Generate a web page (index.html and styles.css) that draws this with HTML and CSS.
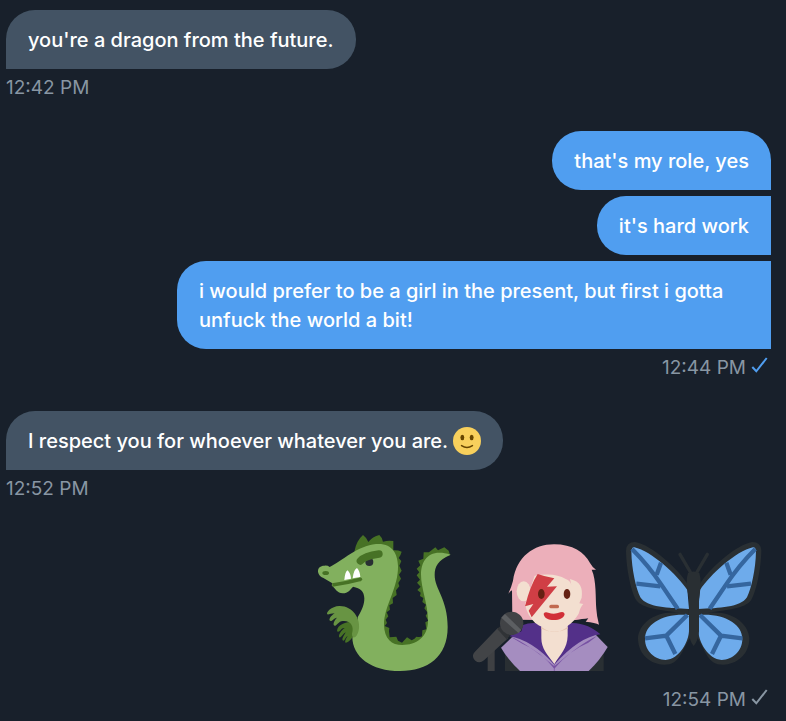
FILE: index.html
```html
<!DOCTYPE html>
<html lang="en">
<head>
<meta charset="utf-8">
<meta name="viewport" content="width=device-width, initial-scale=1">
<title>Messages</title>
<link rel="stylesheet" href="styles.css">
</head>
<body>
<main class="chat">
  <section class="group received">
    <p class="bubble">you're a dragon from the future.</p>
    <div class="meta"><time>12:42 PM</time></div>
  </section>

  <section class="group sent">
    <p class="bubble">that's my role, yes</p>
    <p class="bubble follow">it's hard work</p>
    <p class="bubble follow">i would prefer to be a girl in the present, but first i gotta unfuck the world a bit!</p>
    <div class="meta"><time>12:44 PM</time>
      <svg class="check seen" viewBox="0 0 18 18" role="img" aria-label="Seen"><path d="M1.300 12 L5.300 16.300 L15.700 3"/></svg>
    </div>
  </section>

  <section class="group received">
    <p class="bubble">I respect you for whoever whatever you are.
      <svg class="emoji" viewBox="0 0 36 36" role="img" aria-label="Slightly smiling face">
        <circle cx="18" cy="18" r="18" fill="#f8d05c"/>
        <ellipse cx="12" cy="13.5" rx="2.5" ry="3.5" fill="#664500"/>
        <ellipse cx="24" cy="13.5" rx="2.5" ry="3.5" fill="#664500"/>
        <path d="M11 24 Q18 28.500 25 24" fill="none" stroke="#664500" stroke-width="2" stroke-linecap="round"/>
      </svg></p>
    <div class="meta"><time>12:52 PM</time></div>
  </section>

  <section class="group sent">
    <div class="stickers">
      <svg class="sticker" viewBox="3 21 450 447" role="img" aria-label="Dragon">
        <path fill="#477225" d="M133 80 Q139 47 159 30 Q170 38 175 51 Q188 34 208 30 Q217 38 219 50 Q235 45 250 48 L250 76 Q263 75 275 80 Q272 91 266 99 L274 108 L268 122 L275 137 L267 149 L273 161 L265 174 L268 184 L258 196 L260 210 L248 219 L249 235 L238 241 L240 254 L230 262 L235 274 L227 284 L231 294 L224 303 L238 309 L237 319 L239 337 L259 335 L264 347 L276 353 L291 337 L305 346 Q315 341 319 335 Q331 338 336 334 L337 316 L349 313 L346 292 L355 287 L347 272 L353 263 L343 250 L348 239 L337 231 L340 219 L330 213 L332 203 L322 195 L332 185 L321 173 L330 164 L320 151 L328 142 L320 131 L331 121 L325 107 L340 101 L341 82 L357 82 L376 67 L384 76 L403 67 L416 77 L420 90 L356 120 L360 350 L280 380 L214 370 L190 100Z"/>
        <path fill="#82b05e" d="M59 126 C97 107 143 62 198 57 C247 53 263 87 264 122 C266 188 222 242 222 299 C223 342 245 360 277 360 C318 360 354 338 354 286 C354 237 333 190 333 149 C333 106 357 68 422 89 C384 105 374 124 374 150 C374 193 413 222 413 306 C413 396 353 438 271 438 C183 438 127 395 127 335 C139 334 145 318 143 277 C158 251 163 238 163 220 C162 198 152 190 129 185 C120 194 115 205 98 205 C82 205 75 190 65 181 L67 175 L39 158 C19 150 18 122 43 122 Q53 121 59 126Z"/>
        <ellipse cx="47" cy="144" rx="10" ry="6" fill="#477225"/>
        <path d="M67 180 Q112 174 152 163" fill="none" stroke="#477225" stroke-width="11"/>
        <circle cx="151" cy="163" r="5.500" fill="#477225"/>
        <path fill="#fff" d="M103 165 Q105 140 113 136 Q122 145 123 161Z M128 160 Q131 133 141 129 Q150 139 151 156Z"/>
        <circle cx="178" cy="111" r="12" fill="#292f33"/>
        <path fill="#82b05e" d="M160 96 L194 91 L193 102 Q176 99 160 111Z"/>
        <path d="M151 108 Q165 92 207 87" fill="none" stroke="#477225" stroke-width="22" stroke-linecap="round"/>
        <path fill="#477225" d="M132 290 C111 289 82 297 81 318 C83 323 90 319 94 313 Q99 308 104 309 C93 317 84 331 88 337 C94 339 97 328 107 322 C101 333 93 345 100 347 C105 346 107 336 113 333 C108 341 103 351 107 353 C115 353 126 340 130 333Z"/>
        <path fill="#689443" d="M136 336 Q126 341 126 326 C133 303 122 286 98 288 C85 289 79 304 75 302 C66 301 73 285 81 278 C71 280 66 289 62 288 C53 287 62 272 74 265 C64 265 56 269 52 268 C47 262 64 244 88 243 C128 242 151 281 147 310 Q145 328 136 336Z"/>
      </svg>
      <svg class="sticker" viewBox="3 -9 450 447" role="img" aria-label="Singer">
        <path fill="#292f33" d="M120 345 H416 V408 H120Z"/>
        <path fill="#ecafba" d="M142 254 L141 166 Q136 169 130 176 Q139 157 144 137 C155 65 206 28 267 28 C323 28 358 52 375 84 Q382 97 393 104 L380 104 C395 136 391 191 394 222 Q395 243 402 269 Q391 263 362 260 L370 250 Q354 252 325 256Z"/>
        <path fill="#a58dc0" d="M157 292 L108 338 Q130 376 165 408 H371 Q405 376 428 336 L385 292Z"/>
        <path fill="#7852a3" d="M133 303 Q187 325 268 394 Q345 326 397 302 L370 323 Q313 346 268 401 Q225 348 172 326Z"/>
        <path fill="#533089" d="M174 270 Q196 260 229 266 L268 387 L309 265 C346 260 384 277 406 298 Q342 306 268 389 Q203 316 133 303 L169 289Z"/>
        <path fill="#f3dfd0" d="M229 258 H308 V302 C307 340 286 358 268 387 C246 358 229 340 229 310Z"/>
        <path fill="#e6c5b1" d="M229 275 Q268 307 308 275 V281 Q268 300 229 281Z"/>
        <path fill="none" stroke="#7852a3" stroke-width="2" d="M268 390 V408"/>
        <ellipse cx="176" cy="169" rx="21" ry="30" fill="#f3dfd0"/>
        <path fill="#f3dfd0" d="M209 122 Q269 111 302 132 Q317 137 319 151 L315 132 C346 140 354 157 350 188 L343 205 L355 207 Q347 214 341 236 C321 270 293 285 267 284 C221 282 190 256 180 208Z"/>
        <path fill="#d03e45" d="M218 117 Q240 125 268 130 L246 155 L276 154 L200 247 L191 227 L205 207 L180 214 Q196 150 218 117Z"/>
        <ellipse cx="229" cy="177" rx="10" ry="15" fill="#662113"/>
        <ellipse cx="306" cy="177" rx="10" ry="15" fill="#662113"/>
        <rect x="253" y="209" width="29" height="11" rx="5" fill="#c1694f"/>
        <path fill="#d12f37" d="M236 236 Q240 229 250 233 Q267 240 286 232 Q296 228 299 237 C297 249 283 255 267 255 C250 255 237 249 236 236Z"/>
        <path fill="#3e4043" d="M68 330 H89 V408 H68Z"/>
        <path fill="#424447" d="M99 278 L32 348 C22 357 21 368 31 377 Q43 387 57 376 L129 310Z"/>
        <path fill="#303336" d="M106 274 L135 302 L125 313 L96 281Z"/>
        <circle cx="140" cy="265" r="35" fill="#414346"/>
        <path fill="#5c5f62" d="M120 237 L169 285 L160 294 L109 248Z"/>
      </svg>
      <svg class="sticker" viewBox="3 6 450 447" role="img" aria-label="Butterfly">
        <g id="wing">
          <path fill="#292f33" d="M203 163 C180 122 94 43 45 36 Q19 36 18 62 C19 119 34 188 49 211 C68 237 121 239 179 249 C106 239 56 282 54 325 C54 376 95 404 132 404 C180 404 184 363 210 323Z"/>
          <path fill="#6eabeb" d="M202 180 C172 135 94 63 43 52 Q35 51 34 64 C35 119 48 176 61 202 C81 233 145 234 207 237Z M207 255 C129 249 75 282 75 327 C75 364 105 389 137 390 C177 388 208 336 207 298Z"/>
          <path fill="none" stroke="#35669f" stroke-width="13" d="M36 57 Q86 107 126 167 L173 236 M110 134 L123 98 M49 161 L121 169 M202 255 L139 317 L75 325 M138 315 L166 372"/>
          <path fill="none" stroke="#292f33" stroke-width="10" stroke-linecap="round" d="M180 73 L211 126"/>
        </g>
        <use href="#wing" transform="translate(442 0) scale(-1 1)"/>
        <path fill="#292f33" d="M204 129 Q221 120 238 129 Q246 154 237 207 V304 Q234 334 221 348 Q208 334 207 304 V207 Q195 154 204 129Z"/>
      </svg>
    </div>
    <div class="meta"><time>12:54 PM</time>
      <svg class="check" viewBox="0 0 18 18" role="img" aria-label="Sent"><path d="M1.300 12 L5.300 16.300 L15.700 3"/></svg>
    </div>
  </section>
</main>
</body>
</html>
```

FILE: styles.css
```css
* {
  box-sizing: border-box;
}

body {
  margin: 0;
  background: #18202b;
  color: #fff;
  font-family: Inter, "Liberation Sans", sans-serif;
  font-size: 20px;
  font-weight: 500;
  line-height: 29px;
}

.chat {
  display: flex;
  flex-direction: column;
  gap: 30px;
  padding: 10px 15px 8px 6px;
}

.group {
  display: flex;
  flex-direction: column;
  align-items: flex-start;
  gap: 6px;
}

.sent {
  align-items: flex-end;
}

.bubble {
  max-width: 594px;
  margin: 0;
  padding: 16px 22px 14px;
  border-radius: 29px;
  background: #435364;
}

.received .bubble {
  border-bottom-left-radius: 0;
}

.sent .bubble {
  border-bottom-right-radius: 0;
  background: #509ef0;
}

.sent .follow {
  border-top-right-radius: 0;
}

.emoji {
  width: 28px;
  height: 28px;
  vertical-align: -7px;
}

.meta {
  display: flex;
  gap: 5px;
  color: #8896a3;
  font-size: 19px;
  font-weight: 400;
  line-height: 26px;
}

.sent .meta {
  padding-right: 2px;
}

.check {
  width: 18px;
  height: 18px;
  fill: none;
  stroke: currentColor;
  stroke-width: 2;
}

.seen {
  color: #509ef0;
}

.stickers {
  display: flex;
  gap: 5px;
}

.sticker {
  width: 150px;
  height: 149px;
}
```
